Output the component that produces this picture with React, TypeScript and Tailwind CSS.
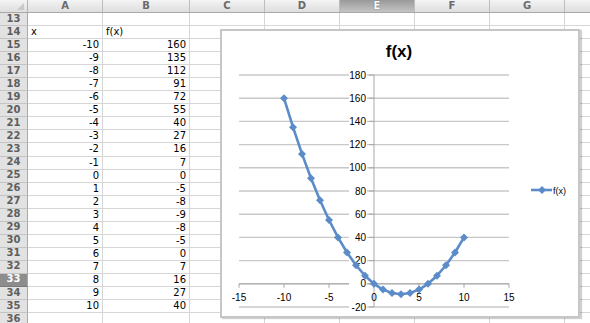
import React from "react";

const cols = [
  { name: "A", w: "w-[75px]" },
  { name: "B", w: "w-[87px]" },
  { name: "C", w: "w-[75px]" },
  { name: "D", w: "w-[75px]" },
  { name: "E", w: "w-[75px]" },
  { name: "F", w: "w-[75px]" },
  { name: "G", w: "w-[75px]" },
];

const xs = Array.from({ length: 21 }, (_, i) => i - 10);
const f = (x: number) => x * x - 6 * x;

const rows: { n: number; a: string; b: string; num: boolean }[] = [
  { n: 13, a: "", b: "", num: false },
  { n: 14, a: "x", b: "f(x)", num: false },
  ...xs.map((x, i) => ({ n: 15 + i, a: String(x), b: String(f(x)), num: true })),
  { n: 36, a: "", b: "", num: false },
];

// chart mapping, in page pixels
const px = (x: number) => 374 + 9 * x;
const py = (y: number) => 283.8 - 1.16 * y;
const yTicks = [180, 160, 140, 120, 100, 80, 60, 40, 20, 0, -20];
const xTicks = [-15, -10, -5, 0, 5, 10, 15];
const blue = "#5b8cc8";

function Diamond({ x, y }: { x: number; y: number }) {
  return <polygon points={`${x},${y - 4} ${x + 4},${y} ${x},${y + 4} ${x - 4},${y}`} fill={blue} />;
}

function Chart() {
  const pts = xs.map((x) => `${px(x)},${py(f(x))}`).join(" ");
  return (
    <div className="absolute left-[220px] top-[29px] h-[289px] w-[360px] bg-white shadow-[inset_0_0_0_2px_#c6c6c6,2px_1px_1px_rgba(0,0,0,0.18)]">
      <svg className="absolute inset-0" width={360} height={289} viewBox="220 29 360 289">
        <text x={399} y={57} textAnchor="middle" fontFamily="'Liberation Sans', Arial, sans-serif" fontWeight="bold" fontSize={17} fill="#000">
          f(x)
        </text>
        {yTicks.map((t) => (
          <line key={t} x1={239} x2={509} y1={py(t)} y2={py(t)} stroke="#c8c8c8" strokeWidth={1.4} />
        ))}
        <line x1={374} x2={374} y1={py(180)} y2={py(-20)} stroke="#a8a8a8" strokeWidth={1} />
        <line x1={239} x2={509} y1={py(0)} y2={py(0)} stroke="#a8a8a8" strokeWidth={1} />
        {yTicks.map((t) => (
          <line key={"t" + t} x1={369} x2={374} y1={py(t)} y2={py(t)} stroke="#a8a8a8" strokeWidth={1} />
        ))}
        {xTicks.map((t) => (
          <line key={"x" + t} x1={px(t)} x2={px(t)} y1={py(0)} y2={py(0) + 4} stroke="#a8a8a8" strokeWidth={1} />
        ))}
        {yTicks.map((t) => (
          <g key={"l" + t}>
            <rect x={349} y={py(t) - 5} width={18} height={10} fill="#fff" />
            <text x={366} y={py(t) + 3.5} textAnchor="end" fontFamily="'Liberation Sans', Arial, sans-serif" fontSize={10} fill="#000">
              {t}
            </text>
          </g>
        ))}
        {xTicks.map((t) => (
          <text key={"xl" + t} x={px(t)} y={301} textAnchor="middle" fontFamily="'Liberation Sans', Arial, sans-serif" fontSize={10} fill="#000">
            {t}
          </text>
        ))}
        <polyline points={pts} fill="none" stroke={blue} strokeWidth={2.6} strokeLinejoin="round" />
        {xs.map((x) => (
          <Diamond key={x} x={px(x)} y={py(f(x))} />
        ))}
        <line x1={531} x2={552} y1={190} y2={190} stroke={blue} strokeWidth={2.6} />
        <Diamond x={542} y={190} />
        <text x={553} y={193.5} fontFamily="'Liberation Sans', Arial, sans-serif" fontSize={9} fill="#000">
          f(x)
        </text>
      </svg>
    </div>
  );
}

export default function App() {
  return (
    <div className="relative h-[323px] w-[590px] overflow-hidden bg-white font-['DejaVu_Sans',Verdana,sans-serif] text-[10px] text-black">
      <div className="flex h-[13px] border-b border-[#a9a9a9]">
        <div className="relative w-[28px] shrink-0 border-r border-[#b4b4b4] bg-gradient-to-b from-[#f4f4f4] to-[#dedede]">
          <svg className="absolute bottom-[2px] right-[3px]" width={7} height={7} viewBox="0 0 7 7">
            <polygon points="7,0 7,7 0,7" fill="#c9c9c9" />
          </svg>
        </div>
        {cols.map((c) => (
          <div
            key={c.name}
            className={`${c.w} flex shrink-0 items-center justify-center border-r border-[#bdbdbd] text-[10px] leading-none font-bold ${
              c.name === "E"
                ? "bg-gradient-to-b from-[#9a9a9a] to-[#c4c4c4] text-white [text-shadow:0_0_1px_#444]"
                : "bg-gradient-to-b from-[#f4f4f4] to-[#dedede] text-[#6a6a6a]"
            }`}
          >
            {c.name}
          </div>
        ))}
        <div className="flex-1 bg-gradient-to-b from-[#f4f4f4] to-[#dedede]" />
      </div>
      {rows.map((r) => (
        <div key={r.n} className="flex h-[13.05px]">
          <div
            className={`flex w-[28px] shrink-0 items-center justify-center border-r border-b border-r-[#a9a9a9] pb-px text-[10px] leading-none font-bold ${
              r.n === 33
                ? "border-b-[#7a7a7a] bg-[#8d8d8d] text-white"
                : "border-b-[#c4c4c4] bg-[#e2e2e2] text-[#5e5e5e]"
            }`}
          >
            {r.n}
          </div>
          {cols.map((c, i) => (
            <div
              key={c.name}
              className={`${c.w} flex shrink-0 items-center overflow-hidden border-r border-b border-[#d6d6d6] px-[3px] leading-none ${
                r.num ? "justify-end" : "justify-start"
              }`}
            >
              {i === 0 ? r.a : i === 1 ? r.b : ""}
            </div>
          ))}
          <div className="flex-1 border-b border-[#d6d6d6]" />
        </div>
      ))}
      <Chart />
    </div>
  );
}
